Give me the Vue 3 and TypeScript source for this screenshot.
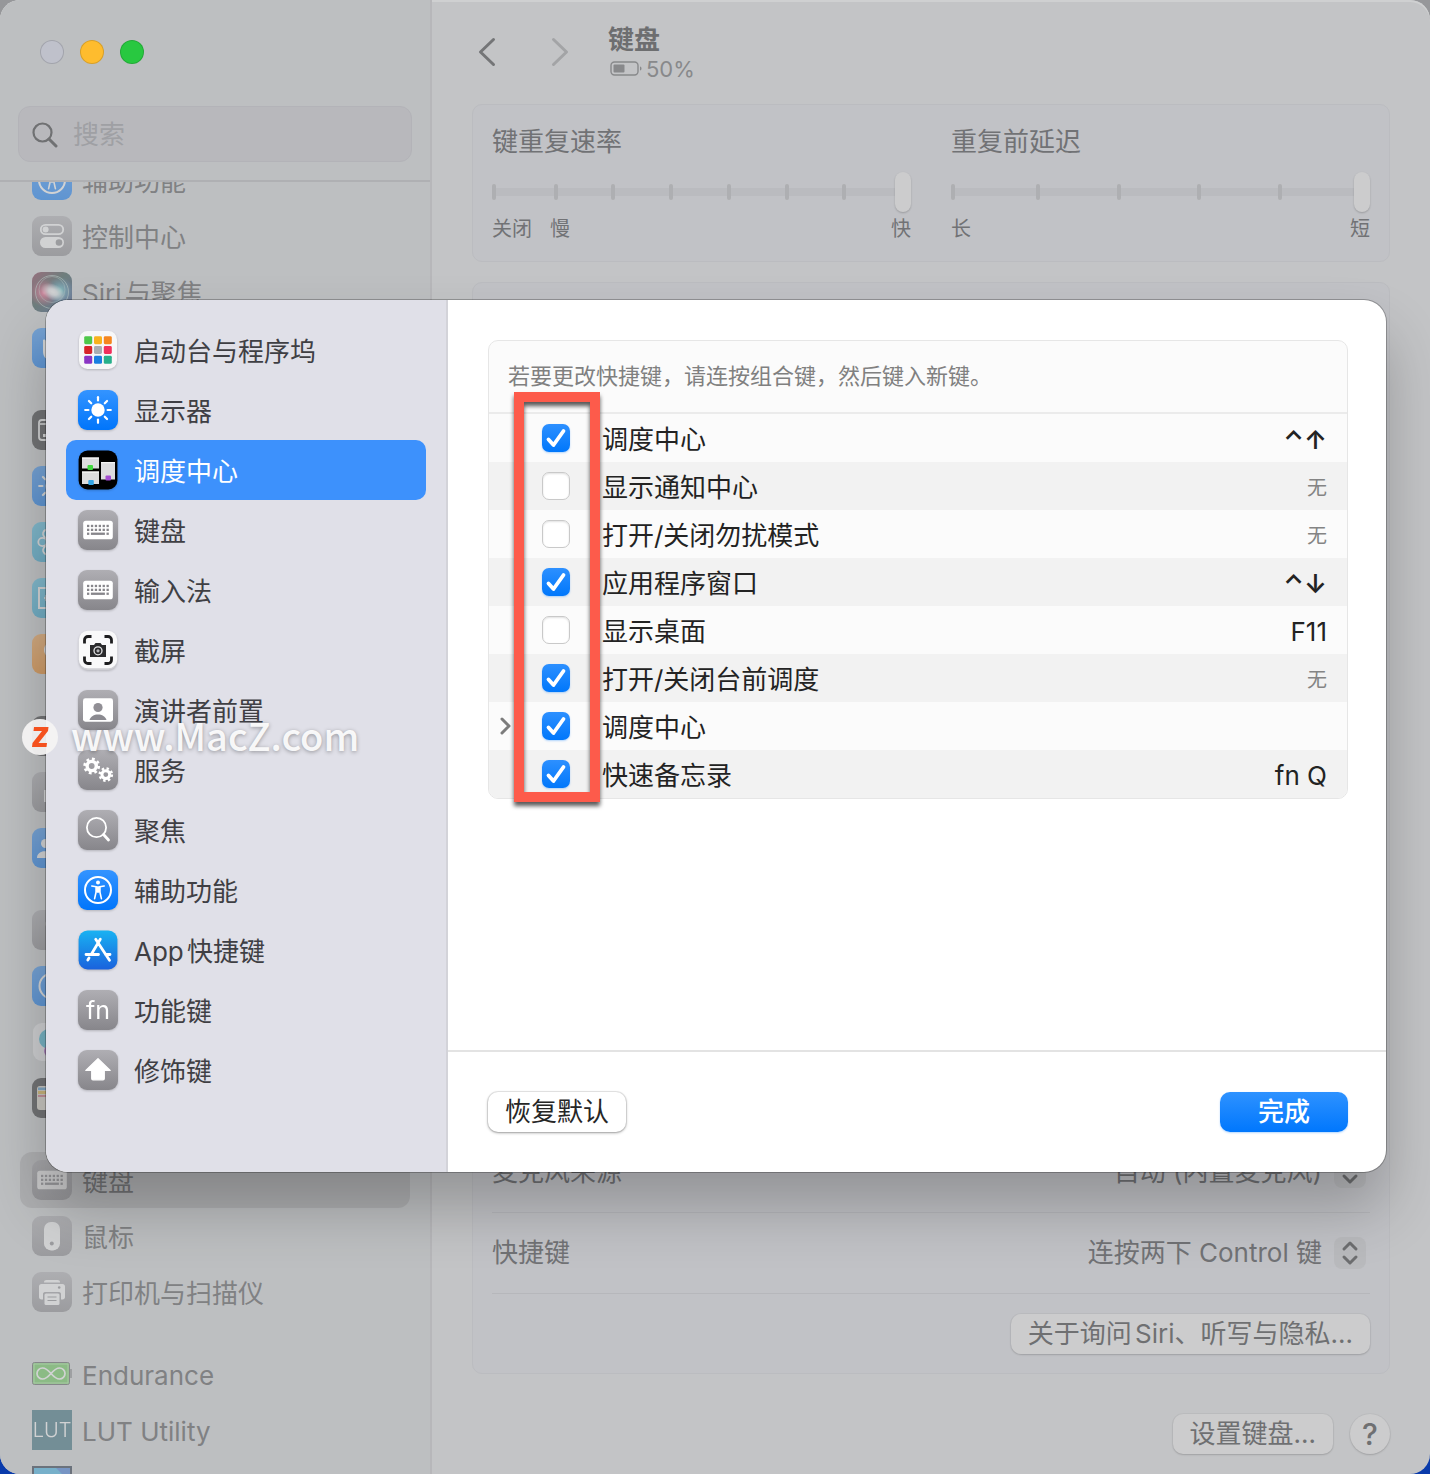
<script setup lang="ts">
import { reactive, ref } from 'vue'

interface NavEntry {
  icon: string
  name?: string
  current?: boolean
  glyph?: string
}

interface Shortcut {
  id: string
  name: string
  keys: string
  enabled: boolean
  arrows?: boolean
  expandable?: boolean
}

const settingsGroups: NavEntry[][] = [
  [
    { icon: 'access', name: '辅助功能' },
    { icon: 'control', name: '控制中心' },
    { icon: 'siri', name: 'Siri与聚焦' },
    { icon: 'privacy' },
  ],
  [{ icon: 'dock' }, { icon: 'display' }, { icon: 'wallpaper' }, { icon: 'saver' }, { icon: 'energy' }],
  [{ icon: 'lock' }, { icon: 'touchid' }, { icon: 'users' }],
  [{ icon: 'password' }, { icon: 'internet' }, { icon: 'game' }, { icon: 'wallet' }],
  [
    { icon: 'keyboard', name: '键盘', current: true },
    { icon: 'mouse', name: '鼠标' },
    { icon: 'printer', name: '打印机与扫描仪' },
  ],
  [{ icon: 'endurance', name: 'Endurance' }, { icon: 'lut', name: 'LUT Utility', glyph: 'LUT' }, { icon: 'extra' }],
]

const categories: NavEntry[] = [
  { icon: 'launchpad', name: '启动台与程序坞' },
  { icon: 'display', name: '显示器' },
  { icon: 'mission', name: '调度中心' },
  { icon: 'keyboard', name: '键盘' },
  { icon: 'keyboard', name: '输入法' },
  { icon: 'screenshot', name: '截屏' },
  { icon: 'presenter', name: '演讲者前置' },
  { icon: 'services', name: '服务' },
  { icon: 'spotlight', name: '聚焦' },
  { icon: 'access', name: '辅助功能' },
  { icon: 'appstore', name: 'App快捷键' },
  { icon: 'fn', name: '功能键', glyph: 'fn' },
  { icon: 'modifier', name: '修饰键' },
]
const activeCategory = ref('调度中心')

const shortcuts = reactive<Shortcut[]>([
  { id: 'mission', name: '调度中心', keys: '⌃↑', enabled: true, arrows: true },
  { id: 'notify', name: '显示通知中心', keys: '', enabled: false },
  { id: 'dnd', name: '打开/关闭勿扰模式', keys: '', enabled: false },
  { id: 'windows', name: '应用程序窗口', keys: '⌃↓', enabled: true, arrows: true },
  { id: 'desktop', name: '显示桌面', keys: 'F11', enabled: false },
  { id: 'stage', name: '打开/关闭台前调度', keys: '', enabled: true },
  { id: 'group', name: '调度中心', keys: ' ', enabled: true, expandable: true },
  { id: 'note', name: '快速备忘录', keys: 'fn Q', enabled: true },
])

const repeatRate = ref(7)
const repeatDelay = ref(5)
const sunRays = [0, 45, 90, 135, 180, 225, 270, 315]
const launchColors = ['#4fc84a', '#f9b21c', '#f5861f', '#d8232a', '#a9adb2', '#f0305c', '#8b35c4', '#1a7fe0', '#27b08b']
const keyColumns = [0, 1, 2, 3, 4, 5]
</script>

<template>
  <svg class="sprite" aria-hidden="true">
    <defs>
      <linearGradient id="g-gray" x1="0" y1="0" x2="0" y2="1"><stop offset="0" stop-color="#afaeb3" /><stop offset="1" stop-color="#87868b" /></linearGradient>
      <linearGradient id="g-blue" x1="0" y1="0" x2="0" y2="1"><stop offset="0" stop-color="#3494ff" /><stop offset="1" stop-color="#0075fb" /></linearGradient>
      <linearGradient id="g-store" x1="0" y1="0" x2="0" y2="1"><stop offset="0" stop-color="#19b2f2" /><stop offset="1" stop-color="#1a62dd" /></linearGradient>
      <linearGradient id="g-cyan" x1="0" y1="0" x2="0" y2="1"><stop offset="0" stop-color="#4fc6ee" /><stop offset="1" stop-color="#28a9d8" /></linearGradient>
      <linearGradient id="g-orange" x1="0" y1="0" x2="0" y2="1"><stop offset="0" stop-color="#ffa64a" /><stop offset="1" stop-color="#f5820c" /></linearGradient>
      <linearGradient id="g-siri" x1="0" y1="0" x2="1" y2="1"><stop offset="0" stop-color="#7c2440" /><stop offset=".45" stop-color="#22443f" /><stop offset="1" stop-color="#243a86" /></linearGradient>
      <radialGradient id="g-pink"><stop offset="0" stop-color="#ff5f8f" /><stop offset="1" stop-color="#e0305f" stop-opacity="0" /></radialGradient>
      <radialGradient id="g-aqua"><stop offset="0" stop-color="#63d8d0" /><stop offset="1" stop-color="#3d8fe0" stop-opacity="0" /></radialGradient>
      <radialGradient id="g-white"><stop offset="0" stop-color="#fff" /><stop offset=".35" stop-color="#fff" stop-opacity=".85" /><stop offset="1" stop-color="#fff" stop-opacity="0" /></radialGradient>
    </defs>
    <symbol id="i-access" viewBox="0 0 40 40">
      <rect width="40" height="40" rx="9" fill="url(#g-blue)" />
      <circle cx="20" cy="20" r="13" fill="none" stroke="#fff" stroke-width="2" />
      <circle cx="20" cy="12.600" r="2" fill="#fff" />
      <path d="M13.800 16 18.200 16.800V21.500L16.600 28.600M26.200 16 21.800 16.800V21.500L23.400 28.600" fill="none" stroke="#fff" stroke-width="1.600" stroke-linecap="round" stroke-linejoin="round" />
      <path d="M17.600 16.200h4.800v5.500L20 23l-2.400-1.300z" fill="#fff" />
    </symbol>
    <symbol id="i-control" viewBox="0 0 40 40">
      <rect width="40" height="40" rx="9" fill="url(#g-gray)" />
      <rect x="8.800" y="8.800" width="22.400" height="9.400" rx="4.700" fill="none" stroke="#fff" stroke-width="1.800" />
      <circle cx="13.600" cy="13.500" r="3" fill="#fff" />
      <rect x="8" y="21" width="24" height="11" rx="5.500" fill="#fff" />
      <circle cx="27" cy="26.500" r="3.300" fill="#87868b" />
    </symbol>
    <symbol id="i-siri" viewBox="0 0 40 40">
      <rect width="40" height="40" rx="9" fill="url(#g-siri)" />
      <circle cx="12" cy="21" r="14" fill="url(#g-pink)" />
      <circle cx="28" cy="19" r="14" fill="url(#g-aqua)" />
      <ellipse cx="21" cy="20" rx="13" ry="8" transform="rotate(25 21 20)" fill="url(#g-white)" />
      <circle cx="20" cy="20" r="16.500" fill="none" stroke="#bfe0d6" stroke-opacity=".6" />
      <circle cx="20" cy="17.500" r="13" fill="none" stroke="#bfe0d6" stroke-opacity=".4" />
    </symbol>
    <symbol id="i-privacy" viewBox="0 0 40 40">
      <rect width="40" height="40" rx="9" fill="url(#g-blue)" />
      <path d="M11 12c2-1 3 0 3 2v5h1V9c0-3 4-3 4 0v9h1V8c0-3 4-3 4 0v10h1v-7c0-3 4-3 4 0v12c0 6-3 9-9 9-7 0-9-4-9-9z" fill="#fff" />
    </symbol>
    <symbol id="i-dock" viewBox="0 0 40 40">
      <rect width="40" height="40" rx="9" fill="#2c2c2e" />
      <rect x="7" y="10" width="26" height="20" rx="3" fill="none" stroke="#fff" stroke-width="1.800" />
      <path d="M8 14h24" stroke="#fff" stroke-width="1.600" />
      <path d="M11 24h4v3h-4zM18 24h4v3h-4zM25 24h4v3h-4z" fill="#fff" />
    </symbol>
    <symbol id="i-display" viewBox="0 0 40 40">
      <rect width="40" height="40" rx="9" fill="url(#g-blue)" />
      <circle cx="20" cy="20" r="6.700" fill="#fff" />
      <path v-for="a in sunRays" :key="a" d="M20 7.200v3.200" :transform="`rotate(${a} 20 20)`" stroke="#fff" stroke-width="2.200" stroke-linecap="round" />
    </symbol>
    <symbol id="i-wallpaper" viewBox="0 0 40 40">
      <rect width="40" height="40" rx="9" fill="url(#g-cyan)" />
      <g fill="none" stroke="#fff" stroke-width="1.800">
        <circle cx="20" cy="20" r="4" />
        <circle v-for="a in [30, 90, 150, 210, 270, 330]" :key="a" cx="20" cy="10.500" r="4.200" :transform="`rotate(${a} 20 20)`" />
      </g>
    </symbol>
    <symbol id="i-saver" viewBox="0 0 40 40">
      <rect width="40" height="40" rx="9" fill="url(#g-cyan)" />
      <rect x="7" y="10" width="26" height="20" fill="none" stroke="#fff" stroke-width="2" />
      <path d="M12 20h5M14 17v6" stroke="#fff" stroke-width="1.600" />
    </symbol>
    <symbol id="i-energy" viewBox="0 0 40 40">
      <rect width="40" height="40" rx="9" fill="url(#g-orange)" />
      <path d="M20 8c-5 0-8 4-8 8 0 5 4 6 4 10h8c0-4 4-5 4-10 0-4-3-8-8-8zM16 28h8v4h-8z" fill="#fff" />
    </symbol>
    <symbol id="i-lock" viewBox="0 0 40 40">
      <rect width="40" height="40" rx="9" fill="#2c2c2e" />
      <rect x="15" y="18" width="14" height="13" rx="2" fill="#fff" />
    </symbol>
    <symbol id="i-touchid" viewBox="0 0 40 40">
      <rect width="40" height="40" rx="9" fill="url(#g-gray)" />
      <rect x="12" y="18" width="16" height="12" fill="#fff" />
    </symbol>
    <symbol id="i-users" viewBox="0 0 40 40">
      <rect width="40" height="40" rx="9" fill="url(#g-blue)" />
      <circle cx="13.500" cy="15.500" r="4.500" fill="#fff" />
      <circle cx="26.500" cy="15.500" r="4.500" fill="#fff" />
      <path d="M5 30c0-9 15-9 15 0zM20 30c0-9 15-9 15 0z" fill="#fff" />
    </symbol>
    <symbol id="i-password" viewBox="0 0 40 40">
      <rect width="40" height="40" rx="9" fill="url(#g-gray)" />
      <circle cx="20" cy="14" r="6.500" fill="#fff" />
      <path d="M18 18h4v14h-4z" fill="#fff" />
    </symbol>
    <symbol id="i-internet" viewBox="0 0 40 40">
      <rect width="40" height="40" rx="9" fill="url(#g-blue)" />
      <circle cx="20" cy="20" r="12.500" fill="none" stroke="#fff" stroke-width="2" />
      <circle cx="20" cy="20" r="5" fill="none" stroke="#fff" stroke-width="2" />
    </symbol>
    <symbol id="i-game" viewBox="0 0 40 40">
      <rect x="1" y="1" width="38" height="38" rx="9" fill="#f4f4f6" />
      <circle cx="17" cy="17" r="10" fill="#33b6d6" />
      <circle cx="18" cy="29" r="6" fill="#a04bc0" />
    </symbol>
    <symbol id="i-wallet" viewBox="0 0 40 40">
      <rect width="40" height="40" rx="9" fill="#2c2c2e" />
      <rect x="5" y="8" width="30" height="24" rx="3" fill="#e8e2d2" />
      <path d="M6 9.500h28v2.500H6z" fill="#4d9bd6" />
      <path d="M6 13h28v3H6z" fill="#e8b93c" />
      <path d="M6 17h28v2H6z" fill="#d76a7c" />
    </symbol>
    <symbol id="i-keyboard" viewBox="0 0 40 40">
      <rect width="40" height="40" rx="9" fill="url(#g-gray)" />
      <rect x="5.200" y="10.700" width="29.600" height="18.600" rx="2.600" fill="#fff" />
      <g fill="#87868b">
        <template v-for="c in keyColumns" :key="c">
          <rect :x="9 + c * 3.900" y="14.800" width="2.300" height="2.300" />
          <rect :x="9 + c * 3.900" y="18.700" width="2.300" height="2.300" />
        </template>
        <rect x="9" y="22.600" width="2.300" height="2.300" />
        <rect x="28.500" y="22.600" width="2.300" height="2.300" />
        <rect x="12.900" y="22.600" width="14" height="2.300" />
      </g>
    </symbol>
    <symbol id="i-mouse" viewBox="0 0 40 40">
      <rect width="40" height="40" rx="9" fill="url(#g-gray)" />
      <rect x="12" y="6" width="16" height="28.400" rx="7" fill="#fff" />
      <circle cx="19.800" cy="27.400" r="2" fill="#87868b" />
    </symbol>
    <symbol id="i-printer" viewBox="0 0 40 40">
      <rect width="40" height="40" rx="9" fill="url(#g-gray)" />
      <path d="M12 10.500c0-1.800 1-2.500 2.500-2.500h11c1.500 0 2.500.7 2.500 2.500z" fill="#fff" />
      <path d="M9.500 12h21c1.500 0 2.500 1 2.500 2.500V25c0 1.500-1 2.500-2.500 2.500H29V22c0-1-.6-2-2-2H13c-1.400 0-2 1-2 2v5.500H9.500C8 27.500 7 26.500 7 25V14.500C7 13 8 12 9.500 12z" fill="#fff" />
      <circle cx="27.200" cy="15.500" r="1.300" fill="#87868b" />
      <rect x="12.500" y="21.500" width="15" height="11.500" rx="1.500" fill="#fff" />
      <path d="M15.500 25h9M15.500 28.500h9" stroke="#87868b" stroke-width="1.200" />
    </symbol>
    <symbol id="i-endurance" viewBox="0 0 40 40">
      <rect x=".5" y="8.500" width="37" height="22" rx="2" fill="#62cc50" stroke="#55585a" />
      <rect x="2" y="10" width="34" height="19" fill="none" stroke="#a7e79b" />
      <path d="M39 15v9" stroke="#77797b" stroke-width="1.500" />
      <path d="M19 19.500c-3.500-4-5.500-5.500-8.500-5.500a5.500 5.500 0 0 0 0 11c3 0 5-1.500 8.500-5.500s5.500-5.500 8.500-5.500a5.500 5.500 0 0 1 0 11c-3 0-5-1.500-8.500-5.500z" fill="none" stroke="#fff" stroke-width="1.700" />
    </symbol>
    <symbol id="i-extra" viewBox="0 0 40 40">
      <rect x="1" y="1" width="38" height="38" fill="#37b3ea" stroke="#1c2a3c" stroke-width="2" />
      <path d="M24 2h14v14z" fill="#3676de" />
    </symbol>
    <symbol id="i-launchpad" viewBox="0 0 40 40">
      <rect x="1" y="1" width="38" height="38" rx="8.500" fill="#f7f7f8" />
      <rect v-for="(color, n) in launchColors" :key="color" :x="6.200 + (n % 3) * 9.800" :y="6.200 + Math.floor(n / 3) * 9.800" width="8" height="8" rx="1.400" :fill="color" />
    </symbol>
    <symbol id="i-mission" viewBox="0 0 40 40">
      <rect x=".6" y=".6" width="38.800" height="38.800" rx="9" fill="#000" />
      <path d="M4 7.500h17v11H4zM4 21.500h17V34H4zM23 12h14v17.500H23z" fill="#dcdcde" />
      <path d="M4 7.500h17v1.200H4zM4 21.500h17v1.200H4zM23 12h14v1.200H23z" fill="#f5f5f5" />
      <rect x="9.500" y="15" width="5.500" height="5" rx="1" fill="#41d83f" />
      <rect x="10.300" y="30" width="5.500" height="5" rx="1" fill="#34a6e8" />
      <rect x="27.500" y="25.500" width="5.500" height="5" rx="1" fill="#a34dd0" />
    </symbol>
    <symbol id="i-screenshot" viewBox="0 0 40 40">
      <rect x=".8" y="2.500" width="38.400" height="37.500" rx="9" fill="#cfcfd4" />
      <rect x=".8" y=".8" width="38.400" height="37.500" rx="9" fill="#f9f9fa" />
      <path d="M13.500 6.500H10A3.500 3.500 0 0 0 6.500 10v3.500M26.500 6.500H30a3.500 3.500 0 0 1 3.500 3.500v3.500M13.500 33.500H10A3.500 3.500 0 0 1 6.500 30v-3.500M26.500 33.500H30a3.500 3.500 0 0 0 3.500-3.500v-3.500" fill="none" stroke="#1d1d1f" stroke-width="2.800" />
      <path d="M12 15h4l1.500-2h5l1.500 2h4v12H12z" fill="#2a2a2c" />
      <circle cx="20" cy="20.800" r="4" fill="#2a2a2c" stroke="#e4e4e6" stroke-width="1.300" />
      <circle cx="20" cy="20.800" r="1.600" fill="#b5b5b8" />
    </symbol>
    <symbol id="i-presenter" viewBox="0 0 40 40">
      <rect width="40" height="40" rx="9" fill="url(#g-gray)" />
      <rect x="5" y="8.300" width="30" height="23.400" rx="2.400" fill="#fff" />
      <circle cx="20" cy="17.500" r="4.600" fill="#918f95" />
      <path d="M11.500 30c1-3.500 4.500-5.500 8.500-5.500s7.500 2 8.500 5.500z" fill="#8b8a90" />
    </symbol>
    <symbol id="i-services" viewBox="0 0 40 40">
      <rect width="40" height="40" rx="9" fill="url(#g-gray)" />
      <g fill="none" stroke="#fff">
        <circle cx="13.700" cy="16" r="4.600" stroke-width="3.400" />
        <circle cx="13.700" cy="16" r="7" stroke-width="2.800" stroke-dasharray="2.750 2.750" />
        <circle cx="27.800" cy="24.600" r="3.900" stroke-width="3" />
        <circle cx="27.800" cy="24.600" r="6" stroke-width="2.600" stroke-dasharray="2.360 2.350" />
      </g>
    </symbol>
    <symbol id="i-spotlight" viewBox="0 0 40 40">
      <rect width="40" height="40" rx="9" fill="url(#g-gray)" />
      <circle cx="18.500" cy="17.500" r="9.600" fill="none" stroke="#fff" stroke-width="1.800" />
      <path d="M25.500 24.500 30.500 30" stroke="#fff" stroke-width="2.800" stroke-linecap="round" />
    </symbol>
    <symbol id="i-appstore" viewBox="0 0 40 40">
      <rect x=".6" y=".6" width="38.800" height="38.800" rx="9" fill="url(#g-store)" />
      <path d="M22.300 9.300 13.500 24M17.700 9.300 31.500 30.300M8 24.500h12.500M27.500 24.500H32M11 28 9.800 30" fill="none" stroke="#fff" stroke-width="2.800" stroke-linecap="round" />
    </symbol>
    <symbol id="i-modifier" viewBox="0 0 40 40">
      <rect width="40" height="40" rx="9" fill="url(#g-gray)" />
      <path d="M20 8.600 32.200 20.500H26.300V28.500q0 1.300-1.300 1.300H15q-1.300 0-1.300-1.300V20.500H7.800z" fill="#fff" stroke="#fff" stroke-width="1.200" stroke-linejoin="round" />
    </symbol>
  </svg>

  <div class="window">
    <aside class="sidebar">
      <header class="sidebar-top">
        <div class="lights">
          <button class="light light-close" aria-label="关闭"></button>
          <button class="light light-min" aria-label="最小化"></button>
          <button class="light light-zoom" aria-label="缩放"></button>
        </div>
        <label class="search">
          <svg viewBox="0 0 26 26" width="26" height="26"><circle cx="10.500" cy="10.500" r="9" fill="none" stroke="#707173" stroke-width="2.200" /><path d="m17 17 7 7" stroke="#707173" stroke-width="3" stroke-linecap="round" /></svg>
          <input type="text" placeholder="搜索" />
        </label>
      </header>
      <nav class="settings-nav">
        <ul v-for="(group, g) in settingsGroups" :key="g">
          <li v-for="item in group" :key="item.icon" :class="{ current: item.current }">
            <span v-if="item.glyph" class="icon glyph" :class="item.icon">{{ item.glyph }}</span>
            <svg v-else class="icon"><use :href="`#i-${item.icon}`" /></svg>
            <span v-if="item.name" class="entry">{{ item.name }}</span>
          </li>
        </ul>
      </nav>
    </aside>

    <main class="content">
      <header class="toolbar">
        <button class="nav-btn" aria-label="后退"><svg viewBox="0 0 18 30" width="18" height="30"><path d="M15.500 2.500 2.500 15l13 12.500" stroke="#747577" /></svg></button>
        <button class="nav-btn" aria-label="前进"><svg viewBox="0 0 18 30" width="18" height="30"><path d="m2.500 2.500 13 12.500-13 12.500" stroke="#a3a4a6" /></svg></button>
        <div class="heading">
          <h1>键盘</h1>
          <p>
            <svg viewBox="0 0 34 16" width="34" height="16"><rect x="1" y="1" width="27" height="13" rx="3.500" fill="none" stroke="#88898b" stroke-width="1.400" /><rect x="3.500" y="3.500" width="11" height="8" rx="1" fill="#88898b" /><path d="M30 5.500c2 .5 2 3.500 0 4z" fill="#88898b" /></svg>
            50%
          </p>
        </div>
      </header>

      <section class="panel sliders">
        <div class="slider">
          <label for="rate">键重复速率</label>
          <div class="track">
            <div class="ticks"><i v-for="n in 8" :key="n"></i></div>
            <input id="rate" v-model="repeatRate" type="range" min="0" max="7" />
          </div>
          <div class="marks"><span>关闭</span><span>慢</span><span class="end">快</span></div>
        </div>
        <div class="slider">
          <label for="delay">重复前延迟</label>
          <div class="track">
            <div class="ticks"><i v-for="n in 6" :key="n"></i></div>
            <input id="delay" v-model="repeatDelay" type="range" min="0" max="5" />
          </div>
          <div class="marks"><span>长</span><span class="end">短</span></div>
        </div>
      </section>

      <section class="panel dictation">
        <div class="row">
          <label for="mic">麦克风来源</label>
          <div class="picker">
            <select id="mic"><option>自动 (内置麦克风)</option></select>
            <svg class="stepper" viewBox="0 0 32 32"><path d="m10 12 6-6 6 6M10 20l6 6 6-6" /></svg>
          </div>
        </div>
        <div class="row">
          <label for="hotkey">快捷键</label>
          <div class="picker">
            <select id="hotkey"><option>连按两下 Control 键</option></select>
            <svg class="stepper" viewBox="0 0 32 32"><path d="m10 12 6-6 6 6M10 20l6 6 6-6" /></svg>
          </div>
        </div>
        <div class="row last"><button class="push dim">关于询问Siri、听写与隐私…</button></div>
      </section>

      <footer class="content-foot">
        <button class="push dim">设置键盘…</button>
        <button class="help dim">?</button>
      </footer>
    </main>

    <div class="overlay">
      <div class="sheet" role="dialog" aria-modal="true">
        <nav class="categories">
          <button v-for="item in categories" :key="item.name" :class="{ active: item.name === activeCategory }" @click="activeCategory = item.name ?? ''">
            <span v-if="item.glyph" class="icon glyph" :class="item.icon">{{ item.glyph }}</span>
            <svg v-else class="icon"><use :href="`#i-${item.icon}`" /></svg>
            <span class="entry">{{ item.name }}</span>
          </button>
        </nav>
        <div class="sheet-main">
          <div class="sheet-body">
            <div class="shortcut-card">
              <p class="hint">若要更改快捷键，请连按组合键，然后键入新键。</p>
              <table>
                <tbody>
                  <tr v-for="s in shortcuts" :key="s.id">
                    <td class="disclose"><svg v-if="s.expandable" viewBox="0 0 12 18" width="12" height="18"><path d="m2 2 7 7-7 7" /></svg></td>
                    <td class="tick"><input :id="s.id" v-model="s.enabled" type="checkbox" /></td>
                    <td class="label"><label :for="s.id">{{ s.name }}</label></td>
                    <td class="keys" :class="{ none: !s.keys, arrows: s.arrows }">{{ s.keys || '无' }}</td>
                  </tr>
                </tbody>
              </table>
              <div class="highlight"></div>
            </div>
          </div>
          <footer class="sheet-foot">
            <button class="push">恢复默认</button>
            <button class="push primary">完成</button>
          </footer>
        </div>
      </div>
    </div>

    <div class="watermark">
      <svg viewBox="0 0 36 36" width="36" height="36"><circle cx="18" cy="18" r="18" fill="#f4f3f3" fill-opacity=".94" /><path d="M12 8h14.500L26 12 16.500 24H25l-.500 4H10l.500-4L20 12h-8.500z" fill="#f4511e" /></svg>
      <span>www.MacZ.com</span>
    </div>
  </div>
</template>

<style>
body {
  margin: 0;
  background: linear-gradient(#96979a 50%, #0a3bab 50%);
}
</style>

<style scoped>
* {
  box-sizing: border-box;
}
.sprite {
  position: absolute;
  width: 0;
  height: 0;
}
.window {
  position: relative;
  display: flex;
  height: 100vh;
  overflow: hidden;
  border-radius: 20px;
  background: #c3c4c6;
  box-shadow: inset 0 2px 0 #cfd0d1;
  font: 26px/36px Inter, "Noto Sans CJK SC", sans-serif;
  text-autospace: normal;
  color: #717275;
}
button,
input,
select {
  font: inherit;
  color: inherit;
  margin: 0;
  border: 0;
  padding: 0;
  background: none;
  text-autospace: inherit;
}
.icon {
  width: 40px;
  height: 40px;
  flex: none;
  filter: drop-shadow(0 1px 1px rgba(0, 0, 0, 0.2));
}
.glyph {
  overflow: hidden;
  color: #fff;
  text-align: center;
  line-height: 40px;
}
.glyph.fn {
  border-radius: 9px;
  background: linear-gradient(#afaeb3, #87868b);
  font-size: 25px;
}
.glyph.lut {
  background: #2e6877;
  font-size: 20px;
  font-weight: 300;
}
.entry {
  padding-top: 3px;
}

.sidebar {
  display: flex;
  flex-direction: column;
  flex: none;
  width: 432px;
  border-right: 2px solid #b7b7ba;
  background: #bdbfc1;
}
.sidebar-top {
  position: relative;
  z-index: 1;
  height: 180px;
  flex: none;
  padding: 40px 18px 18px;
  box-shadow: 0 2px 0 #afb0b3;
}
.lights {
  display: flex;
  gap: 16px;
  padding-left: 22px;
}
.light {
  width: 24px;
  height: 24px;
  border-radius: 50%;
  border: 1px solid rgba(0, 0, 0, 0.15);
}
.light-close {
  background: #bfc1cb;
}
.light-min {
  background: #febc2e;
}
.light-zoom {
  background: #28c840;
}
.search {
  display: flex;
  align-items: center;
  gap: 15px;
  height: 56px;
  margin-top: 42px;
  padding: 2px 13px 0;
  border: 1px solid #b3b3b8;
  border-radius: 12px;
  background: #b8b8bc;
}
.search input {
  flex: 1;
  min-width: 0;
  outline: none;
}
.search input::placeholder {
  color: #9fa0a4;
  opacity: 1;
}
.settings-nav {
  flex: 1;
  min-height: 0;
  overflow: hidden;
}
.settings-nav ul {
  list-style: none;
  margin: 0 0 26px;
  padding: 0 20px;
}
.settings-nav ul:first-child {
  margin-top: -28px;
}
.settings-nav li {
  display: flex;
  align-items: center;
  gap: 10px;
  height: 56px;
  padding: 0 12px;
  border-radius: 12px;
  color: #808183;
}
.settings-nav li.current {
  background: #aeafb1;
  color: #717274;
}
.settings-nav .icon {
  filter: brightness(0.9) opacity(0.5);
}

.content {
  display: flex;
  flex-direction: column;
  flex: 1;
  min-width: 0;
}
.toolbar {
  display: flex;
  align-items: center;
  height: 104px;
  flex: none;
  padding: 0 46px;
}
.nav-btn {
  display: flex;
  width: 18px;
  margin-right: 55px;
}
.nav-btn + .nav-btn {
  margin-right: 39px;
}
.nav-btn path {
  fill: none;
  stroke-width: 3;
  stroke-linecap: round;
  stroke-linejoin: round;
}
.heading h1 {
  margin: 0;
  padding-top: 2px;
  font-size: 26px;
  line-height: 32px;
  font-weight: 700;
  color: #6d6e70;
}
.heading p {
  display: flex;
  align-items: center;
  gap: 2px;
  margin: 0;
  padding-left: 2px;
  font-size: 22px;
  line-height: 26px;
  color: #88898b;
}
.panel {
  margin: 0 40px 20px;
  border: 1px solid #bbbcc0;
  border-radius: 10px;
  background: #c1c2c6;
}
.sliders {
  display: flex;
  gap: 40px;
  height: 158px;
  flex: none;
  padding: 19px 19px 0;
}
.slider {
  flex: 1;
  min-width: 0;
}
.slider label {
  display: block;
}
.track {
  position: relative;
  display: flex;
  align-items: center;
  height: 40px;
  margin: 12px 0 5px;
}
.ticks {
  position: absolute;
  inset: 12px 0;
  display: flex;
  justify-content: space-between;
  padding: 0 7px 0 4px;
}
.ticks::before {
  content: "";
  position: absolute;
  inset: 4px 0;
  border-radius: 4px;
  background: #babbbf;
}
.ticks i {
  position: relative;
  width: 4px;
  border-radius: 2px;
  background: #aeafb2;
}
.ticks i:first-of-type {
  margin: 0 4px 0 -4px;
}
.track input {
  appearance: none;
  position: relative;
  width: 100%;
  height: 40px;
}
.track input::-webkit-slider-thumb {
  appearance: none;
  width: 16px;
  height: 40px;
  border-radius: 8px;
  background: #cccccd;
  box-shadow: 0 1px 2px rgba(0, 0, 0, 0.2);
}
.marks {
  display: flex;
  gap: 18px;
  font-size: 20px;
  line-height: 24px;
}
.marks .end {
  margin-left: auto;
}
.dictation {
  display: flex;
  flex: 1;
  min-height: 0;
  flex-direction: column;
  justify-content: flex-end;
  margin-bottom: 0;
  padding: 0 19px;
}
.row {
  display: flex;
  flex: none;
  align-items: center;
  justify-content: space-between;
  height: 81px;
  border-bottom: 1px solid #b6b7bb;
}
.row.last {
  height: 79px;
  justify-content: flex-end;
  border-bottom: 0;
}
.picker {
  display: flex;
  align-items: center;
  gap: 12px;
  padding-right: 4px;
}
.picker select {
  appearance: none;
  height: 36px;
  text-align-last: right;
}
.stepper {
  width: 32px;
  height: 32px;
  border-radius: 8px;
  background: #b9babd;
}
.stepper path {
  fill: none;
  stroke: #6d6e70;
  stroke-width: 3;
  stroke-linecap: round;
  stroke-linejoin: round;
}
.push {
  height: 40px;
  padding: 0 17px;
  border-radius: 10px;
  background: #fff;
  color: #262626;
  line-height: 38px;
  box-shadow: 0 0 0 1px rgba(0, 0, 0, 0.08), 0 1px 3px rgba(0, 0, 0, 0.35);
}
.dim {
  background: #cccccd;
  color: #6f7072;
  box-shadow: 0 0 0 1px rgba(0, 0, 0, 0.03), 0 1px 2px rgba(0, 0, 0, 0.15);
}
.content-foot {
  display: flex;
  flex: none;
  justify-content: flex-end;
  gap: 17px;
  padding: 40px 40px 20px;
}
.help {
  width: 40px;
  height: 40px;
  border-radius: 50%;
  font-size: 30px;
  font-weight: 500;
}

.overlay {
  position: absolute;
  inset: 0;
  display: flex;
  align-items: center;
  padding: 0 44px 2px 46px;
}
.sheet {
  display: flex;
  flex: 1;
  min-width: 0;
  overflow: hidden;
  border-radius: 22px;
  background: #fff;
  box-shadow: 0 0 0 1px rgba(0, 0, 0, 0.25), 0 36px 60px rgba(0, 0, 0, 0.24);
}
.categories {
  display: flex;
  flex-direction: column;
  flex: none;
  width: 402px;
  padding: 20px 20px 72px;
  border-right: 2px solid #d3d3d9;
  background: #e0e0e8;
}
.categories button {
  display: flex;
  align-items: center;
  gap: 16px;
  height: 60px;
  padding: 0 12px;
  border-radius: 10px;
  color: #3f3f44;
  text-align: left;
}
.categories button.active {
  background: #3d91fc;
  color: #fff;
}
.categories .glyph {
  color: #fff;
  text-align: center;
}
.sheet-main {
  display: flex;
  flex-direction: column;
  flex: 1;
  min-width: 0;
}
.sheet-body {
  flex: 1;
  padding: 40px 38px 40px 40px;
}
.shortcut-card {
  position: relative;
  border: 1px solid #e6e6e6;
  border-radius: 10px;
  background: #fbfbfb;
}
.hint {
  margin: 0;
  padding: 17px 19px 18px;
  border-bottom: 2px solid #ebebeb;
  font-size: 22px;
  color: #808080;
}
table {
  width: 100%;
  border-collapse: separate;
  border-spacing: 0;
}
td {
  height: 48px;
  padding: 0;
  color: #232323;
}
tr:nth-child(even) td {
  background: #f2f2f2;
}
tr:last-child td:first-child {
  border-bottom-left-radius: 9px;
}
tr:last-child td:last-child {
  border-bottom-right-radius: 9px;
}
.disclose {
  width: 53px;
  padding-left: 11px;
}
.disclose svg {
  display: block;
}
.disclose path {
  fill: none;
  stroke: #7c7c7c;
  stroke-width: 3;
  stroke-linecap: round;
  stroke-linejoin: round;
}
.tick {
  width: 60px;
}
.tick input {
  appearance: none;
  display: block;
  width: 28px;
  height: 28px;
  border: 1px solid #c9c9c9;
  border-radius: 7px;
  background: #fff;
  box-shadow: inset 0 1px 2px rgba(0, 0, 0, 0.12);
}
.tick input:checked {
  border: 0;
  background: url("data:image/svg+xml,%3Csvg xmlns='http://www.w3.org/2000/svg' viewBox='0 0 28 28'%3E%3Cpath d='M6.500 15.500 11.500 21 21.500 7' fill='none' stroke='white' stroke-width='3.800' stroke-linecap='round' stroke-linejoin='round'/%3E%3C/svg%3E"), linear-gradient(#2d90ff, #0077fb);
  box-shadow: 0 1px 2px rgba(0, 122, 255, 0.3);
}
.label,
.keys {
  padding-top: 3px;
}
.keys {
  padding-right: 20px;
  text-align: right;
  white-space: pre;
}
.keys.none {
  font-size: 20px;
  color: #848484;
}
.keys.arrows {
  font-weight: 600;
}
.highlight {
  position: absolute;
  top: 51px;
  bottom: -4px;
  left: 25px;
  width: 86px;
  border: 10px solid #fd5b4b;
  filter: drop-shadow(0 4px 2px rgba(0, 0, 0, 0.65));
  pointer-events: none;
}
.sheet-foot {
  display: flex;
  flex: none;
  justify-content: space-between;
  padding: 40px 38px 40px 40px;
  border-top: 2px solid #e3e3e3;
}
.push.primary {
  width: 128px;
  background: linear-gradient(#2e92ff, #0077fd);
  color: #fff;
  font-weight: 500;
  box-shadow: 0 1px 2px rgba(0, 122, 255, 0.3);
}

.watermark {
  position: absolute;
  top: 719px;
  left: 22px;
  display: flex;
  align-items: center;
  gap: 13px;
  color: rgba(255, 255, 255, 0.92);
  font: 500 38px/32px "Noto Sans CJK SC", "Noto Sans", sans-serif;
  text-shadow: 0 1px 4px rgba(0, 0, 0, 0.35);
  pointer-events: none;
}
.watermark span {
  padding-bottom: 4px;
}
</style>
